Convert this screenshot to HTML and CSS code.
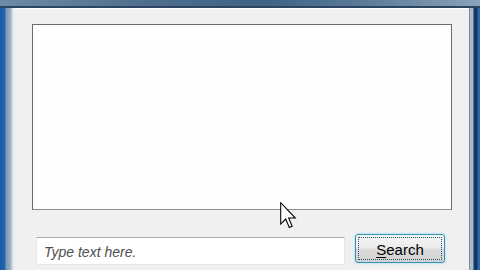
FILE: index.html
```html
<!DOCTYPE html>
<html>
<head>
<meta charset="utf-8">
<link rel="stylesheet" href="styles.css">
</head>
<body>
<div class="frame">
  <div class="client">
    <div class="listbox"></div>
    <div class="row">
      <div class="textbox"><span class="placeholder">Type text here.</span></div>
      <div class="button"><span class="focus"><span class="u">S</span>earch</span></div>
    </div>
  </div>
  <svg class="cursor" width="17" height="27" viewBox="0 0 12 19" preserveAspectRatio="none">
    <path d="M0.5 0.5 V15.5 L4 12 L6.6 18 L8.6 17.1 L6.1 11.3 H10.8 Z" fill="#fff" stroke="#000" stroke-width="0.75" stroke-linejoin="miter"/>
  </svg>
</div>
</body>
</html>
```
FILE: styles.css
```css
html, body {
  margin: 0;
  padding: 0;
  width: 480px;
  height: 270px;
  overflow: hidden;
}
.frame {
  position: relative;
  width: 480px;
  height: 270px;
  box-sizing: border-box;
  padding: 8px 11px 0 14px;
  background:
    linear-gradient(to right, #6d8aa8 0%, #4f6f8e 30%, #3f6384 55%, #5a7a98 75%, #8aa2ba 100%) top left / 100% 6px no-repeat,
    linear-gradient(to bottom, #2c4560, #2c4560) top left / 100% 8px no-repeat,
    linear-gradient(to right,
      #1d5ca4 0px, #2566ae 5px, #7e98b4 6px, #9fb4c9 11px, #d6e0ea 12px, #d6e0ea 13px,
      #f0f0f0 14px, #f0f0f0 468px,
      #4a5a6a 468px, #4a5a6a 469px, #a7bccf 470px, #a7bccf 473px,
      #173759 474px, #173759 477px, #2b68ad 478px);
}
.client {
  height: 100%;
  background: #f0f0f0;
  border-top: 1px solid #ffffff;
  box-sizing: border-box;
  padding: 15px 17px 0 18px;
  display: flex;
  flex-direction: column;
}
.listbox {
  height: 186px;
  box-sizing: border-box;
  background: #fefefe;
  border: 1px solid #6a6a6a;
  border-bottom-color: #8c8c8c;
}
.row {
  display: flex;
  align-items: flex-start;
  gap: 10px;
  margin-top: 24px;
  padding: 0 7px 0 4px;
}
.textbox {
  flex: 1;
  height: 28px;
  margin-top: 3px;
  box-sizing: border-box;
  background: #ffffff;
  border: 1px solid #e3e6ea;
  border-top-color: #a9abb0;
  display: flex;
  align-items: center;
  padding: 1px 0 0 7px;
}
.placeholder {
  font-family: "Liberation Sans", Arial, sans-serif;
  font-style: italic;
  font-size: 14px;
  color: #4e4e4e;
}
.button {
  width: 90px;
  height: 29px;
  box-sizing: border-box;
  border: 1px solid #3b8fae;
  border-radius: 3px;
  box-shadow: 0 0 2px 1px #bfe6f5;
  background: linear-gradient(to bottom, #f6f6f6 0%, #ebebeb 48%, #dcdcdc 52%, #d3d3d3 100%);
  padding: 2px;
  display: flex;
}
.focus {
  flex: 1;
  border: 1px dotted #1f4f66;
  display: flex;
  align-items: center;
  justify-content: center;
  font-family: "Liberation Sans", Arial, sans-serif;
  font-size: 15px;
  color: #000;
  padding-top: 1px;
}
.u {
  text-decoration: underline;
  text-underline-offset: 2px;
}
.cursor {
  position: absolute;
  left: 280px;
  top: 202px;
}
```
